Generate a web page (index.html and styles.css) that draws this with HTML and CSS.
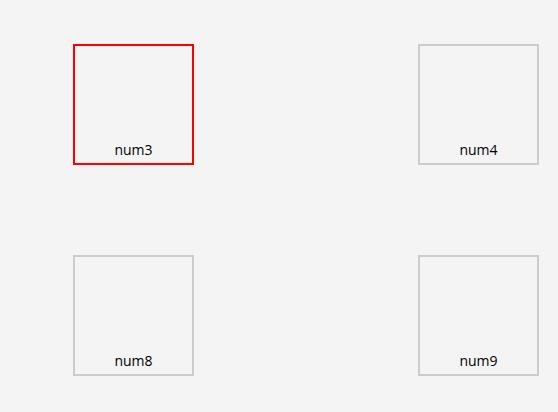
FILE: index.html
```html
<!DOCTYPE html>
<html lang="en">
<head>
  <meta charset="UTF-8">
  <meta name="viewport" content="width=device-width, initial-scale=1.0">
  <title>Tiles</title>
  <link rel="stylesheet" href="styles.css">
</head>
<body>
  <div class="grid">
    <div class="tile selected"><span class="label">num3</span></div>
    <div class="tile"><span class="label">num4</span></div>
    <div class="tile"><span class="label">num8</span></div>
    <div class="tile"><span class="label">num9</span></div>
  </div>
</body>
</html>
```

FILE: styles.css
```css
body {
  margin: 0;
  background-color: #f4f4f4;
  font-family: "Open Sans", "Noto Sans", sans-serif;
  color: #000;
}

.grid {
  display: grid;
  grid-template-columns: 121px 121px;
  column-gap: 224px;
  row-gap: 90px;
  padding: 44px 0 0 73px;
}

.tile {
  box-sizing: border-box;
  width: 121px;
  height: 121px;
  border: 2px solid #cccccc;
  display: flex;
  flex-direction: column;
  justify-content: flex-end;
  align-items: center;
  padding-bottom: 4px;
}

.tile.selected {
  border-color: #ff0000; /* currently focused tile */
}

.label {
  font-size: 14px;
  line-height: 19px;
}
```
